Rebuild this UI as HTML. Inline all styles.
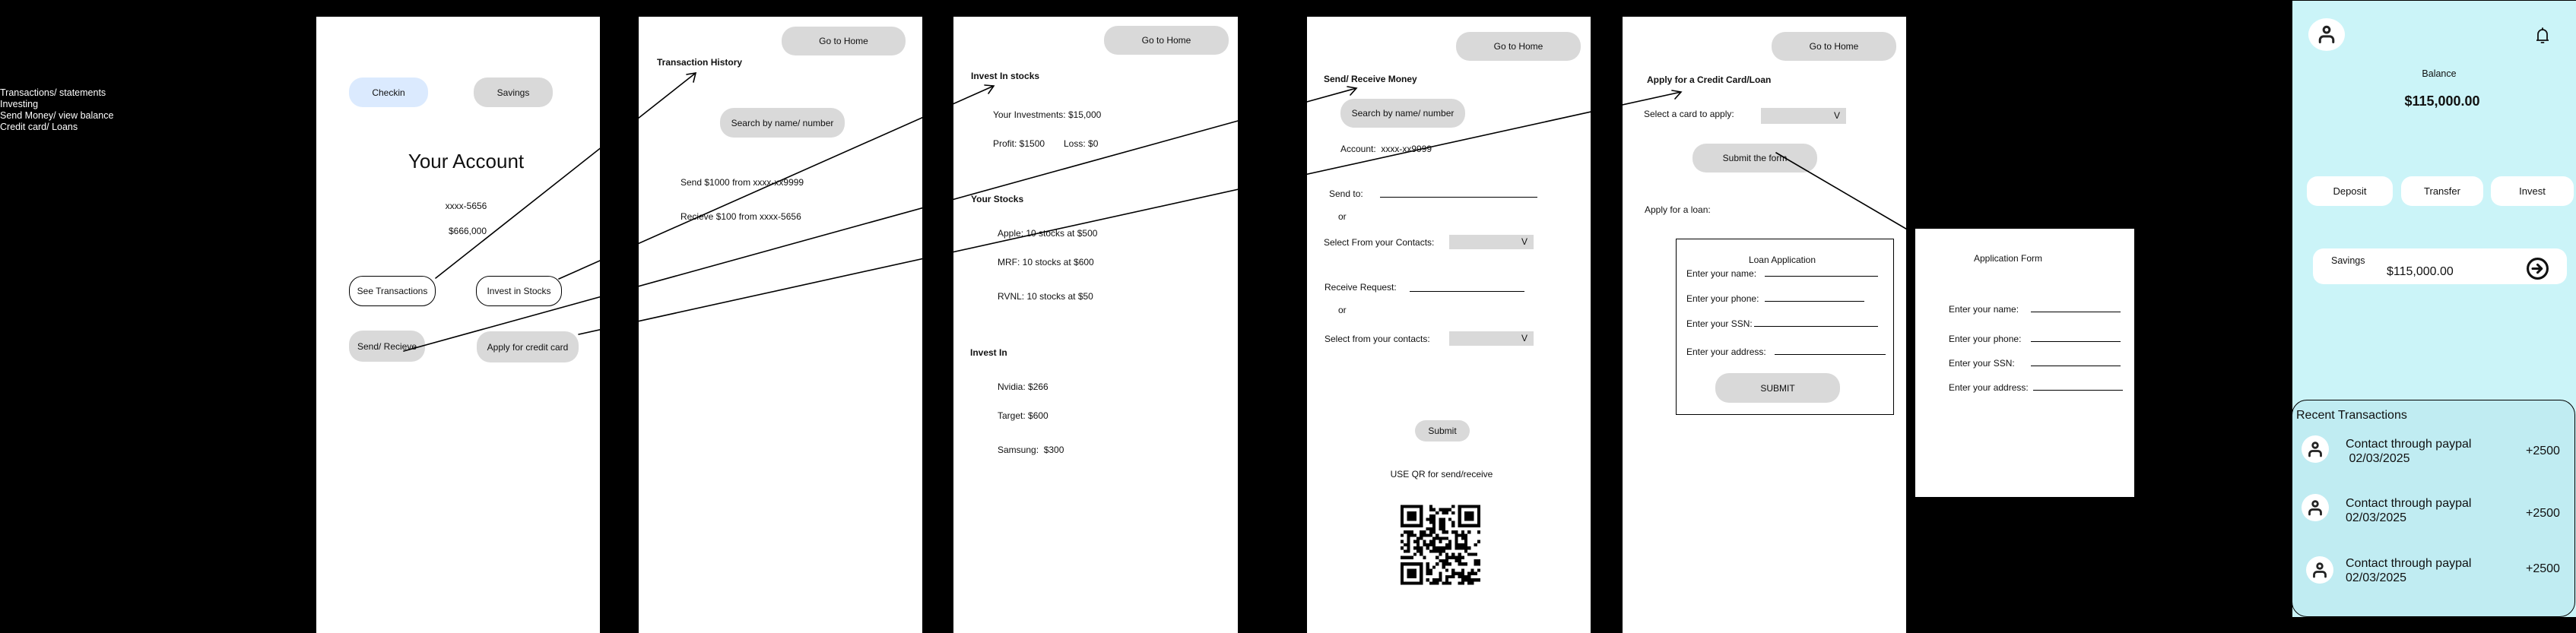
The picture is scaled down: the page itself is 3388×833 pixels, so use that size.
<!DOCTYPE html>
<html><head><meta charset="utf-8"><style>
*{margin:0;padding:0;box-sizing:border-box}
body{width:3388px;height:833px;background:#000;position:relative;overflow:hidden;font-family:"Liberation Sans",sans-serif;color:#111}
.f{position:absolute;background:#fff}
.t{position:absolute;font-size:12px;line-height:14px;white-space:nowrap}
.b{font-weight:bold}
.btn{position:absolute;border-radius:18px;background:#d9d9d9;font-size:12px;display:flex;align-items:center;justify-content:center;white-space:nowrap}
.ln{position:absolute;height:1px;background:#000}
.sel{position:absolute;background:#d9d9d9;font-size:12px;line-height:19px;text-align:right;padding-right:8px}
.c{transform:translateX(-50%)}
</style></head><body>

<div class="t" style="left:0;top:115px;color:#fff;line-height:15px;font-size:12.5px">Transactions/ statements<br>Investing<br>Send Money/ view balance<br>Credit card/ Loans</div>

<!-- frame 1 -->
<div class="f" style="left:416px;top:22px;width:373px;height:811px"></div>
<div class="btn" style="left:459px;top:102px;width:104px;height:39px;background:#dbeafe">Checkin</div>
<div class="btn" style="left:623px;top:102px;width:104px;height:39px">Savings</div>
<div class="t c" style="left:613px;top:196px;font-size:26px;line-height:32px">Your Account</div>
<div class="t c" style="left:613px;top:264px">xxxx-5656</div>
<div class="t c" style="left:615px;top:297px">$666,000</div>
<div class="btn" style="left:459px;top:363px;width:114px;height:40px;background:#fff;border:1px solid #000">See Transactions</div>
<div class="btn" style="left:626px;top:363px;width:113px;height:40px;background:#fff;border:1px solid #000">Invest in Stocks</div>
<div class="btn" style="left:459px;top:435px;width:100px;height:41px">Send/ Recieve</div>
<div class="btn" style="left:627px;top:436px;width:134px;height:41px">Apply for credit card</div>

<!-- frame 2 -->
<div class="f" style="left:840px;top:22px;width:373px;height:811px"></div>
<div class="btn" style="left:1028px;top:35px;width:163px;height:38px">Go to Home</div>
<div class="t b" style="left:864px;top:75px">Transaction History</div>
<div class="btn" style="left:947px;top:142px;width:164px;height:39px">Search by name/ number</div>
<div class="t" style="left:895px;top:233px">Send $1000 from xxxx-xx9999</div>
<div class="t" style="left:895px;top:278px">Recieve $100 from xxxx-5656</div>

<!-- frame 3 -->
<div class="f" style="left:1254px;top:22px;width:374px;height:811px"></div>
<div class="btn" style="left:1452px;top:34px;width:164px;height:38px">Go to Home</div>
<div class="t b" style="left:1277px;top:93px">Invest In stocks</div>
<div class="t" style="left:1306px;top:144px">Your Investments: $15,000</div>
<div class="t" style="left:1306px;top:182px">Profit: $1500</div>
<div class="t" style="left:1399px;top:182px">Loss: $0</div>
<div class="t b" style="left:1277px;top:255px">Your Stocks</div>
<div class="t" style="left:1312px;top:300px">Apple: 10 stocks at $500</div>
<div class="t" style="left:1312px;top:338px">MRF: 10 stocks at $600</div>
<div class="t" style="left:1312px;top:383px">RVNL: 10 stocks at $50</div>
<div class="t b" style="left:1276px;top:457px">Invest In</div>
<div class="t" style="left:1312px;top:502px">Nvidia: $266</div>
<div class="t" style="left:1312px;top:540px">Target: $600</div>
<div class="t" style="left:1312px;top:585px">Samsung:&nbsp; $300</div>

<!-- frame 4 -->
<div class="f" style="left:1719px;top:22px;width:373px;height:811px"></div>
<div class="btn" style="left:1915px;top:42px;width:164px;height:38px">Go to Home</div>
<div class="t b" style="left:1741px;top:97px">Send/ Receive Money</div>
<div class="btn" style="left:1763px;top:130px;width:164px;height:38px">Search by name/ number</div>
<div class="t" style="left:1763px;top:189px">Account:&nbsp; xxxx-xx9999</div>
<div class="t" style="left:1748px;top:248px">Send to:</div>
<div class="ln" style="left:1815px;top:259px;width:207px"></div>
<div class="t" style="left:1760px;top:278px">or</div>
<div class="t" style="left:1741px;top:312px">Select From your Contacts:</div>
<div class="sel" style="left:1906px;top:309px;width:111px;height:19px">V</div>
<div class="t" style="left:1742px;top:371px">Receive Request:</div>
<div class="ln" style="left:1854px;top:383px;width:151px"></div>
<div class="t" style="left:1760px;top:401px">or</div>
<div class="t" style="left:1742px;top:439px">Select from your contacts:</div>
<div class="sel" style="left:1906px;top:436px;width:111px;height:19px">V</div>
<div class="btn" style="left:1861px;top:553px;width:72px;height:28px;border-radius:14px">Submit</div>
<div class="t c" style="left:1896px;top:617px">USE QR for send/receive</div>
<svg id="qr" style="position:absolute;left:1842px;top:664px" width="105" height="106" viewBox="0 0 25 25" shape-rendering="crispEdges"></svg>

<!-- frame 5 -->
<div class="f" style="left:2134px;top:22px;width:373px;height:811px"></div>
<div class="btn" style="left:2330px;top:42px;width:164px;height:38px">Go to Home</div>
<div class="t b" style="left:2166px;top:98px">Apply for a Credit Card/Loan</div>
<div class="t" style="left:2162px;top:143px">Select a card to apply:</div>
<div class="sel" style="left:2316px;top:142px;width:112px;height:21px;line-height:21px">V</div>
<div class="btn" style="left:2226px;top:189px;width:164px;height:38px">Submit the form</div>
<div class="t" style="left:2163px;top:269px">Apply for a loan:</div>
<div style="position:absolute;left:2204px;top:314px;width:287px;height:232px;border:1px solid #000"></div>
<div class="t c" style="left:2344px;top:335px">Loan Application</div>
<div class="t" style="left:2218px;top:353px">Enter your name:</div><div class="ln" style="left:2321px;top:363px;width:149px"></div>
<div class="t" style="left:2218px;top:386px">Enter your phone:</div><div class="ln" style="left:2321px;top:396px;width:131px"></div>
<div class="t" style="left:2218px;top:419px">Enter your SSN:</div><div class="ln" style="left:2307px;top:429px;width:163px"></div>
<div class="t" style="left:2218px;top:456px">Enter your address:</div><div class="ln" style="left:2334px;top:466px;width:146px"></div>
<div class="btn" style="left:2256px;top:491px;width:164px;height:39px">SUBMIT</div>

<!-- application form -->
<div class="f" style="left:2519px;top:301px;width:288px;height:353px"></div>
<div class="t" style="left:2596px;top:333px">Application Form</div>
<div class="t" style="left:2563px;top:400px">Enter your name:</div><div class="ln" style="left:2671px;top:410px;width:118px"></div>
<div class="t" style="left:2563px;top:439px">Enter your phone:</div><div class="ln" style="left:2671px;top:449px;width:118px"></div>
<div class="t" style="left:2563px;top:471px">Enter your SSN:</div><div class="ln" style="left:2671px;top:481px;width:118px"></div>
<div class="t" style="left:2563px;top:503px">Enter your address:</div><div class="ln" style="left:2674px;top:513px;width:118px"></div>

<!-- right panel -->
<div style="position:absolute;left:3014px;top:1px;width:374px;height:811px;background:#cbf4f8;border-left:1px solid #000"></div>
<div style="position:absolute;left:3036px;top:24px;width:48px;height:43px;border-radius:50%;background:#fff"></div>
<svg style="position:absolute;left:3046px;top:31px" width="28" height="28" viewBox="0 0 24 24" fill="none" stroke="#222" stroke-width="2.6" stroke-linecap="round"><circle cx="12" cy="7" r="3.3"/><path d="M4.5 21v-2.5a4 4 0 0 1 4-4h7a4 4 0 0 1 4 4V21"/></svg>
<svg style="position:absolute;left:3334px;top:35px" width="20" height="24" viewBox="0 0 20 24" fill="none" stroke="#111" stroke-width="1.8"><path d="M4 18V10a6 6 0 0 1 12 0v8M2 18h16"/><path d="M10 2v2M8.5 21h3" stroke-linecap="round"/></svg>
<div class="t c" style="left:3208px;top:90px;font-size:12.5px">Balance</div>
<div class="t c b" style="left:3212px;top:123px;font-size:18px;line-height:20px">$115,000.00</div>
<div class="btn" style="left:3034px;top:232px;width:113px;height:39px;background:#fff;border-radius:14px;font-size:13px">Deposit</div>
<div class="btn" style="left:3158px;top:232px;width:108px;height:39px;background:#fff;border-radius:14px;font-size:13px">Transfer</div>
<div class="btn" style="left:3276px;top:232px;width:109px;height:39px;background:#fff;border-radius:14px;font-size:13px">Invest</div>
<div style="position:absolute;left:3042px;top:327px;width:334px;height:47px;background:#fff;border-radius:14px"></div>
<div class="t" style="left:3066px;top:336px;font-size:12.5px">Savings</div>
<div class="t" style="left:3139px;top:349px;font-size:16px;line-height:18px">$115,000.00</div>
<svg style="position:absolute;left:3322px;top:338px" width="31" height="31" viewBox="0 0 24 24" fill="none" stroke="#111" stroke-width="2.4" stroke-linecap="round" stroke-linejoin="round"><circle cx="12" cy="12" r="10"/><path d="M7 12h9M12 8l4 4-4 4"/></svg>
<div style="position:absolute;left:3014px;top:526px;width:373px;height:286px;background:#c0ecf2;border:1px solid #000;border-radius:20px"></div>
<div class="t" style="left:3020px;top:538px;font-size:16px;line-height:18px">Recent Transactions</div>

<div style="position:absolute;left:3027px;top:573px;width:36px;height:36px;border-radius:50%;background:#fff"></div>
<div style="position:absolute;left:3027px;top:650px;width:36px;height:36px;border-radius:50%;background:#fff"></div>
<div style="position:absolute;left:3033px;top:732px;width:36px;height:36px;border-radius:50%;background:#fff"></div>
<svg style="position:absolute;left:3033px;top:579px" width="24" height="24" viewBox="0 0 24 24" fill="none" stroke="#222" stroke-width="2.8" stroke-linecap="round"><circle cx="12" cy="7" r="3.3"/><path d="M4.5 21v-2.5a4 4 0 0 1 4-4h7a4 4 0 0 1 4 4V21"/></svg>
<svg style="position:absolute;left:3033px;top:656px" width="24" height="24" viewBox="0 0 24 24" fill="none" stroke="#222" stroke-width="2.8" stroke-linecap="round"><circle cx="12" cy="7" r="3.3"/><path d="M4.5 21v-2.5a4 4 0 0 1 4-4h7a4 4 0 0 1 4 4V21"/></svg>
<svg style="position:absolute;left:3039px;top:738px" width="24" height="24" viewBox="0 0 24 24" fill="none" stroke="#222" stroke-width="2.8" stroke-linecap="round"><circle cx="12" cy="7" r="3.3"/><path d="M4.5 21v-2.5a4 4 0 0 1 4-4h7a4 4 0 0 1 4 4V21"/></svg>
<div class="t" style="left:3085px;top:575px;font-size:16px;line-height:19px">Contact through paypal<br>&nbsp;02/03/2025</div>
<div class="t" style="left:3085px;top:653px;font-size:16px;line-height:19px">Contact through paypal<br>02/03/2025</div>
<div class="t" style="left:3085px;top:732px;font-size:16px;line-height:19px">Contact through paypal<br>02/03/2025</div>
<div class="t" style="left:3322px;top:585px;font-size:16px;line-height:18px">+2500</div>
<div class="t" style="left:3322px;top:667px;font-size:16px;line-height:18px">+2500</div>
<div class="t" style="left:3322px;top:740px;font-size:16px;line-height:18px">+2500</div>

<!-- connector lines -->
<svg style="position:absolute;left:0;top:0" width="3388" height="833" fill="none" stroke="#000" stroke-width="1.6" stroke-linecap="round">
<path d="M573 366L915 96M903 98l12-2-3 12"/>
<path d="M735 367L1307 113M1295 112l12 1-7 10"/>
<path d="M531 462L1784 116M1772 114l12 2-8 9"/>
<path d="M761 440L2211 121M2199 119l12 2-8 9"/>
<path d="M2336 201L2517 307"/>
</svg>

<script>
(function(){
var s=document.getElementById('qr'),N=25,h='<rect width="25" height="25" fill="#fff"/>';
var seed=7;function r(){seed=(seed*1103515245+12345)&0x7fffffff;return seed/0x7fffffff;}
function fin(x,y){return '<rect x="'+x+'" y="'+y+'" width="7" height="7"/><rect x="'+(x+1)+'" y="'+(y+1)+'" width="5" height="5" fill="#fff"/><rect x="'+(x+2)+'" y="'+(y+2)+'" width="3" height="3"/>';}
for(var y=0;y<N;y++)for(var x=0;x<N;x++){
 if((x<8&&y<8)||(x>16&&y<8)||(x<8&&y>16))continue;
 if(r()<0.5)h+='<rect x="'+x+'" y="'+y+'" width="1" height="1"/>';}
h+=fin(0,0)+fin(18,0)+fin(0,18);
s.innerHTML=h;})();
</script>
</body></html>
